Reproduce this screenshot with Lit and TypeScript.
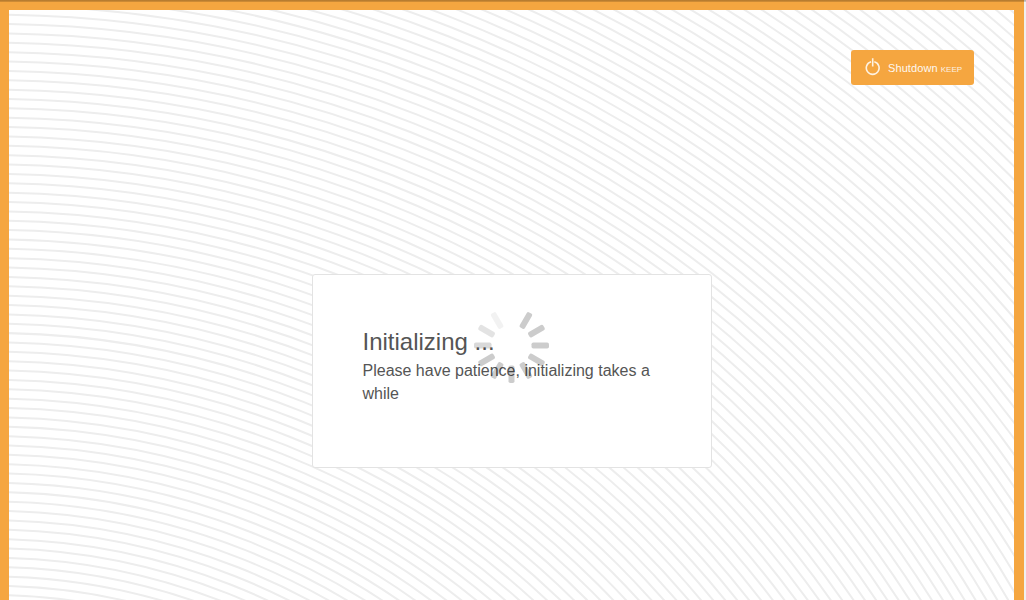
import { LitElement, html, css, svg } from "lit";
import { customElement } from "lit/decorators.js";

const CX = -9, CY = 1191, STEP = 9.363, FIRST = 1176.4;
const rings = Array.from({ length: 110 }, (_, i) => FIRST + (i - 65) * STEP);
const bars = [1, 2, 3, 4, 5, 6, 7, 8, 9, 10, 11];
const tones = [0.2, 0.2, 0.2, 0.2, 0.2, 0.2, 0.2, 0.2, 0.15, 0.11, 0.05];

@customElement("app-root")
export class AppRoot extends LitElement {
  static styles = css`
    :host { display: block; height: 600px; overflow: hidden; font-family: "Liberation Sans", Arial, sans-serif; background: #f0f0f0; }
    * { box-sizing: border-box; }
    .page { position: relative; width: 1024px; height: 600px; border: solid #f5a640; border-width: 10px 10px 0 9px; background: #fff; display: flex; flex-direction: column; align-items: center; }
    .shade { position: absolute; top: -10px; left: -9px; width: 1026px; height: 2px; background: linear-gradient(rgba(0, 0, 0, .25) 50%, rgba(0, 0, 0, .17) 50%); }
    .rings { position: absolute; top: 0; left: 0; width: 1005px; height: 590px; }
    .top { position: relative; align-self: stretch; display: flex; justify-content: flex-end; padding: 40px 40px 0 0; }
    button { display: flex; align-items: center; width: 123px; height: 35px; padding: 0 0 0 14px; border: 0; border-radius: 3px; background: #f5a640; color: #fff; font: 11px "Liberation Sans", Arial, sans-serif; white-space: nowrap; }
    .power { width: 16px; height: 20px; margin: 0 7px 2px 0; }
    .label { letter-spacing: .1px; opacity: .93; }
    small { font-size: 8px; margin: 3px 0 0 3px; opacity: .85; }
    .panel { position: relative; width: 400px; height: 194px; margin-top: 189px; padding: 50px 49px 50px 50px; background: #fff; border: 1px solid #e3e3e3; border-radius: 3px; color: #555; }
    h1 { margin: 0; font-size: 24px; font-weight: 400; line-height: 34px; }
    p { margin: 0; font-size: 16px; line-height: 23px; }
    .spinner { position: absolute; left: 159px; top: 30px; width: 80px; height: 80px; }
  `;
  render() {
    return html`<main class="page">
      <svg class="rings" viewBox="9 10 1005 590">
        ${rings.map((r) => svg`<circle cx=${CX} cy=${CY} r=${r} fill="none" stroke="#ededed" stroke-width="2"></circle>`)}
      </svg>
      <div class="shade"></div>
      <div class="top"><button>
        <svg class="power" viewBox="0 0 16 20" fill="none" stroke="#fff" stroke-opacity=".85" stroke-width="1.6"><path d="M6.1 4.8A6.4 6.4 0 1 0 9.3 4.8M7.7 1.2V9.5"/></svg>
        <span class="label">Shutdown</span><small>KEEP</small>
      </button></div>
      <section class="panel">
        <h1>Initializing ...</h1>
        <p>Please have patience, initializing takes a while</p>
        <svg class="spinner" viewBox="-39.5 -40.5 80 80" fill="#000">
          ${bars.map((n, i) => svg`<rect x="-3" y="-37.5" width="6" height="17.5" rx="1.8" fill-opacity=${tones[i]} transform="rotate(${n * 30})"></rect>`)}
        </svg>
      </section>
    </main>`;
  }
}
